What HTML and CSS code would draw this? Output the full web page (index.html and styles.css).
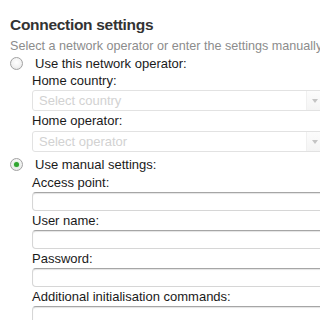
FILE: index.html
```html
<!DOCTYPE html>
<html lang="en">
<head>
  <meta charset="UTF-8" />
  <meta name="viewport" content="width=device-width, initial-scale=1.0"/>
  <title>Connection settings</title>
  <link rel="stylesheet" href="styles.css">
</head>
<body>
  <div class="page">
    <h1 class="title">Connection settings</h1>
    <div class="hint">Select a network operator or enter the settings manually</div>

    <div class="option">
      <span class="radio"></span>
      <span class="option-text">Use this network operator:</span>
    </div>
    <div class="fields">
      <div class="label label-first">Home country:</div>
      <div class="select">
        <span class="placeholder">Select country</span>
        <span class="arrow"></span>
      </div>
      <div class="label label-select">Home operator:</div>
      <div class="select">
        <span class="placeholder">Select operator</span>
        <span class="arrow"></span>
      </div>
    </div>

    <div class="option option-manual">
      <span class="radio checked"></span>
      <span class="option-text">Use manual settings:</span>
    </div>
    <div class="fields">
      <div class="label">Access point:</div>
      <div class="input"></div>
      <div class="label">User name:</div>
      <div class="input"></div>
      <div class="label">Password:</div>
      <div class="input"></div>
      <div class="label">Additional initialisation commands:</div>
      <div class="input"></div>
    </div>
  </div>
</body>
</html>
```

FILE: styles.css
```css
body {
  margin: 0;
  background: #fff;
  font-family: "Liberation Sans", Arial, sans-serif;
  overflow: hidden;
}
.page {
  width: 340px;
  padding: 14px 0 0 10px;
  box-sizing: border-box;
}
.title {
  margin: 0;
  font-size: 15.5px;
  font-weight: bold;
  letter-spacing: -0.3px;
  line-height: 22px;
  color: #333;
}
.hint {
  margin-top: 2px;
  font-size: 12.6px;
  line-height: 17px;
  color: #8c8c8c;
  white-space: nowrap;
}
.option {
  display: flex;
  align-items: center;
  height: 17px;
  gap: 12px;
  font-size: 13px;
  color: #1a1a1a;
}
.option-manual {
  margin-top: 3px;
  height: 18px;
}
.radio {
  width: 11px;
  height: 11px;
  border: 1px solid #a2a2a2;
  border-radius: 50%;
  background: radial-gradient(circle at 50% 40%, #fff 0%, #f2f2f2 55%, #dcdcdc 100%);
  position: relative;
  flex: none;
}
.radio.checked::after {
  content: "";
  position: absolute;
  left: 3px;
  top: 3px;
  width: 5px;
  height: 5px;
  border-radius: 50%;
  background: #2fa52f;
  box-shadow: 0 0 2px #7fd07f;
}
.fields {
  padding-left: 22px;
  display: flex;
  flex-direction: column;
}
.label {
  font-size: 13px;
  line-height: 19px;
  color: #1a1a1a;
  white-space: nowrap;
}
.label-first {
  line-height: 18px;
}
.label-select {
  line-height: 20px;
}
.select {
  display: flex;
  align-items: center;
  height: 21px;
  width: 294px;
  box-sizing: border-box;
  border: 1px solid #e2e2e2;
  border-radius: 3px;
  background: #fff;
}
.placeholder {
  flex: 1;
  padding-left: 6px;
  font-size: 13px;
  color: #d2d2d2;
}
.arrow {
  width: 18px;
  height: 100%;
  border-left: 1px solid #f0f0f0;
  background: linear-gradient(#fcfcfc, #f4f4f4);
  position: relative;
}
.arrow::after {
  content: "";
  position: absolute;
  left: 5px;
  top: 8px;
  border-left: 3px solid transparent;
  border-right: 3px solid transparent;
  border-top: 4px solid #c4c4c4;
}
.input {
  height: 19px;
  width: 300px;
  box-sizing: border-box;
  border: 1px solid #d6d6d6;
  border-top-color: #a6a6a6;
  border-radius: 4px;
  box-shadow: inset 0 1px 1px #e4e4e4;
  background: #fff;
}
```
